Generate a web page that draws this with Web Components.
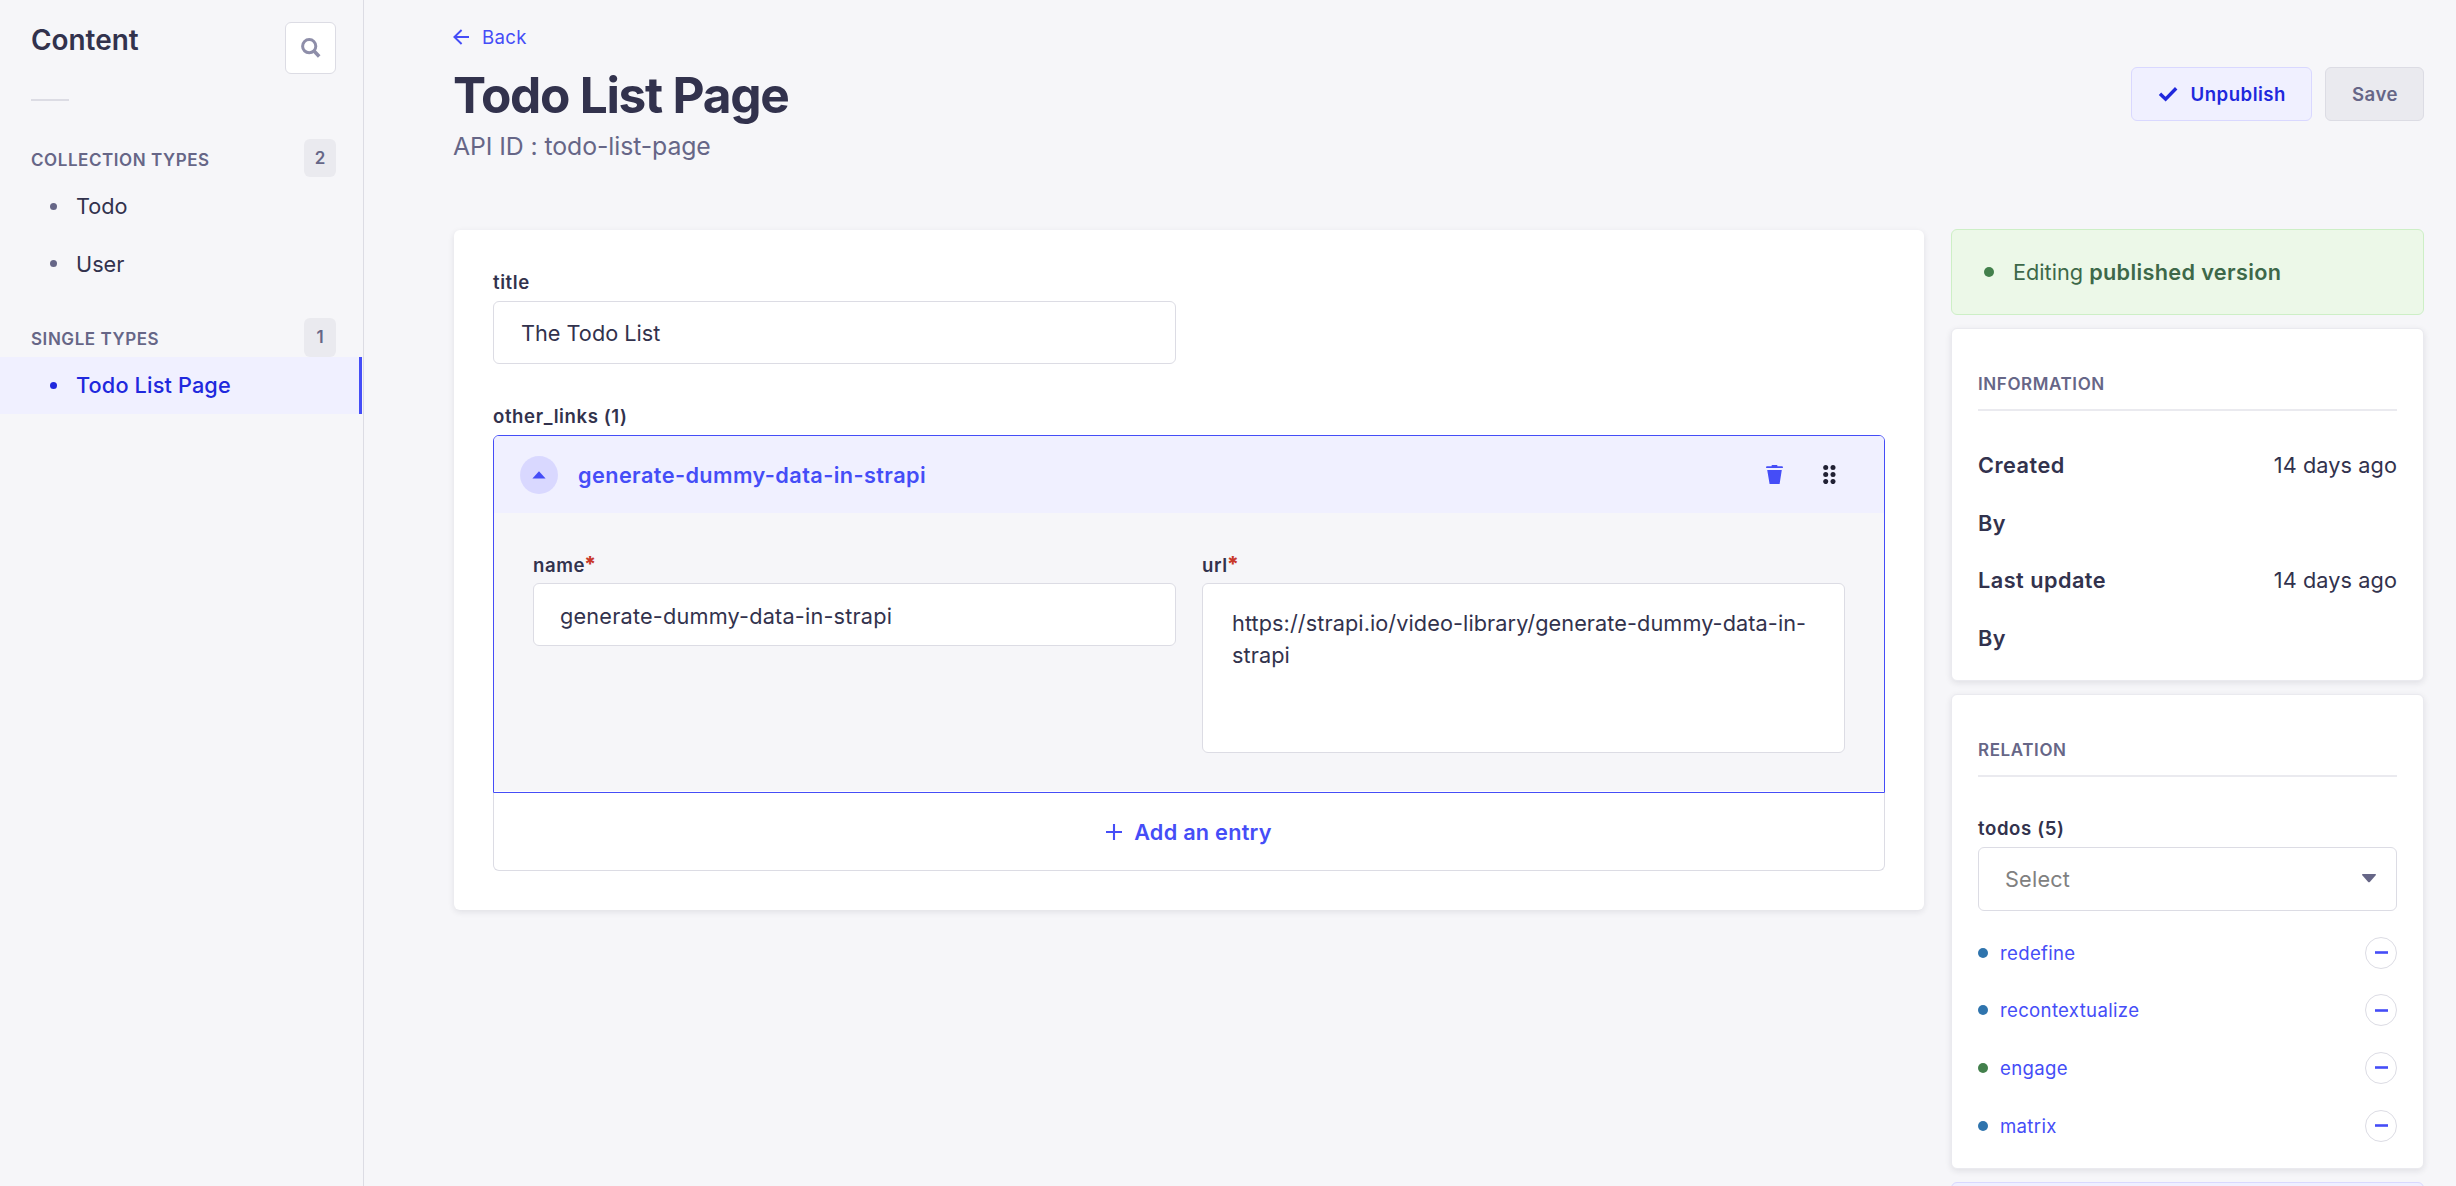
<!DOCTYPE html>
<html lang="en">
<head>
<meta charset="utf-8">
<title>Todo List Page</title>
<style>
    html, body { margin: 0; height: 100%; }
    body {
        --primary100: #f0f0ff;
        --primary200: #d9d8ff;
        --primary600: #454df7;
        --primary700: #2028dd;
        --neutral100: #f6f6f9;
        --neutral150: #eaeaef;
        --neutral200: #dcdce4;
        --neutral500: #8e8ea9;
        --neutral600: #666687;
        --neutral800: #32324d;
        --radius: 6px;
        overflow: hidden;
        background: var(--neutral100);
        color: var(--neutral800);
        font-family: Inter, "Liberation Sans", sans-serif;
        font-size: 21.7px;
        line-height: 32px;
    }
    content-app { height: 1186px; }
</style>
</head>
<body>
<content-app>
    <side-nav slot="nav" heading="Content">
        <nav-section label="Collection Types" count="2">
            <nav-item>Todo</nav-item>
            <nav-item>User</nav-item>
        </nav-section>
        <nav-section label="Single Types" count="1">
            <nav-item active>Todo List Page</nav-item>
        </nav-section>
    </side-nav>
    <page-header heading="Todo List Page" subtitle="API ID : todo-list-page">
        <ui-button variant="secondary"><ui-icon slot="icon" name="check"></ui-icon>Unpublish</ui-button>
        <ui-button variant="disabled">Save</ui-button>
    </page-header>
    <edit-layout>
        <form-card>
            <form-row>
                <text-field label="title" value="The Todo List"></text-field>
            </form-row>
            <repeatable-field label="other_links (1)" heading="generate-dummy-data-in-strapi">
                <form-row>
                    <text-field label="name" required low value="generate-dummy-data-in-strapi"></text-field>
                    <text-field label="url" required multiline value="https://strapi.io/video-library/generate-dummy-data-in-strapi"></text-field>
                </form-row>
            </repeatable-field>
        </form-card>
        <status-banner slot="aside">Editing <b>published version</b></status-banner>
        <side-card slot="aside" heading="Information">
            <info-list>
                <info-row label="Created">14 days ago</info-row>
                <info-row label="By"></info-row>
                <info-row label="Last update">14 days ago</info-row>
                <info-row label="By"></info-row>
            </info-list>
        </side-card>
        <side-card slot="aside" heading="Relation">
            <select-field label="todos (5)" placeholder="Select"></select-field>
            <relation-list>
                <relation-item>redefine</relation-item>
                <relation-item>recontextualize</relation-item>
                <relation-item status="published">engage</relation-item>
                <relation-item>matrix</relation-item>
            </relation-list>
        </side-card>
        <action-box slot="aside"></action-box>
    </edit-layout>
</content-app>

<script>
    // Small base class: every element renders its template into an open root
    class BaseElement extends HTMLElement {
        connectedCallback() {
            if (this.shadowRoot) return;
            this.attachShadow({ mode: 'open' });
            this.shadowRoot.innerHTML = this.render();
        }
        attr(name) {
            return this.getAttribute(name) || '';
        }
    }

    const ICONS = {
        search: { w: 20, h: 20, body: '<circle cx="8.2" cy="8.2" r="6.6" fill="none" stroke="currentColor" stroke-width="3"/><path d="M13 13l5.2 5.4" stroke="currentColor" stroke-width="3.6"/>' },
        back: { w: 16, h: 16, body: '<path d="M16 8H1.4M8.6 1L1.4 8l7.2 7" fill="none" stroke="currentColor" stroke-width="1.9"/>' },
        check: { w: 20, h: 16, body: '<path d="M2 7.8l5.6 5.4L18.2 2.2" fill="none" stroke="currentColor" stroke-width="3.4"/>' },
        up: { w: 14, h: 8, body: '<path d="M7 0.3L13.6 7.6H0.4z" fill="currentColor"/>' },
        down: { w: 14, h: 9, body: '<path d="M0.6 0h12.8q.9.5.3 1.2L7.8 7.9q-.8.8-1.6 0L.3 1.2Q-.3.5.6 0z" fill="currentColor"/>' },
        trash: { w: 17, h: 19, body: '<path d="M5.6 1.2V.6q0-.6.6-.6h4.6q.6 0 .6.6v.6H16q.9 0 .9.9v.9H.1v-.9q0-.9.9-.9zM1.2 4.9h14.6L13.6 19H3.6z" fill="currentColor"/>' },
        drag: { w: 13, h: 19, body: '<g fill="#212134"><circle cx="2.7" cy="2.5" r="2.5"/><circle cx="10" cy="2.5" r="2.5"/><circle cx="2.7" cy="9.5" r="2.5"/><circle cx="10" cy="9.5" r="2.5"/><circle cx="2.7" cy="16.6" r="2.5"/><circle cx="10" cy="16.6" r="2.5"/></g>' },
        plus: { w: 16, h: 16, body: '<path d="M8 0v16M0 8h16" stroke="currentColor" stroke-width="2.1"/>' },
        minus: { w: 13, h: 3, body: '<path d="M0 1.5h13" stroke="currentColor" stroke-width="2.6"/>' }
    };

    class UiIcon extends BaseElement {
        render() {
            const icon = ICONS[this.attr('name')];
            return `
                <style>
                    :host { display: inline-flex; flex: none; }
                    svg { display: block; }
                </style>
                <svg width="${icon.w}" height="${icon.h}" viewBox="0 0 ${icon.w} ${icon.h}">${icon.body}</svg>
            `;
        }
    }

    class ContentApp extends BaseElement {
        render() {
            return `
                <style>
                    :host { display: grid; grid-template-columns: 364px 1fr; }
                    main { padding: 24px 32px 0 90px; min-width: 0; }
                </style>
                <slot name="nav"></slot>
                <main><slot></slot></main>
            `;
        }
    }

    class SideNav extends BaseElement {
        render() {
            return `
                <style>
                    :host { display: block; box-sizing: border-box; border-right: 1px solid var(--neutral200); }
                    header { display: flex; justify-content: space-between; padding: 22px 27px 0 31px; }
                    h2 { margin: 0; font-size: 27.9px; line-height: 36px; font-weight: 600; }
                    button {
                        display: flex; align-items: center; justify-content: center;
                        width: 51px; height: 52px; padding: 0;
                        border: 1px solid var(--neutral200); border-radius: var(--radius);
                        background: #fff; color: var(--neutral500);
                    }
                    hr { width: 38px; height: 2px; margin: 25px 0 38px 31px; border: 0; background: var(--neutral200); }
                    .sections { display: flex; flex-direction: column; gap: 25.6px; }
                </style>
                <header>
                    <h2>${this.attr('heading')}</h2>
                    <button aria-label="Search"><ui-icon name="search"></ui-icon></button>
                </header>
                <hr>
                <div class="sections"><slot></slot></div>
            `;
        }
    }

    class NavSection extends BaseElement {
        render() {
            return `
                <style>
                    :host { display: block; }
                    .head { display: flex; align-items: center; justify-content: space-between; height: 38.4px; padding: 0 27px 0 31px; }
                    .label { padding-top: 3px; font-size: 17px; font-weight: 600; letter-spacing: 0.56px; text-transform: uppercase; color: var(--neutral600); }
                    .count {
                        display: flex; align-items: center; justify-content: center;
                        width: 32px; height: 100%; border-radius: var(--radius);
                        background: var(--neutral150); color: var(--neutral600);
                        font-size: 17px; font-weight: 600;
                    }
                </style>
                <div class="head">
                    <span class="label">${this.attr('label')}</span>
                    <span class="count">${this.attr('count')}</span>
                </div>
                <slot></slot>
            `;
        }
    }

    class NavItem extends BaseElement {
        render() {
            return `
                <style>
                    :host {
                        display: flex; align-items: center; gap: 19px; box-sizing: border-box;
                        height: 57.6px; margin-right: 1px; padding-left: 50px;
                    }
                    :host([active]) {
                        background: var(--primary100); color: var(--primary700);
                        border-right: 3px solid var(--primary600); font-weight: 500; letter-spacing: 0.15px;
                    }
                    i { width: 7px; height: 7px; border-radius: 50%; background: var(--neutral600); }
                    :host([active]) i { background: var(--primary700); }
                </style>
                <i></i><span><slot></slot></span>
            `;
        }
    }

    class PageHeader extends BaseElement {
        render() {
            return `
                <style>
                    :host { display: block; }
                    a { display: flex; align-items: center; gap: 13px; height: 26px; margin-left: -1px; color: var(--primary600); font-size: 18.6px; letter-spacing: 0.3px; }
                    .row { display: flex; align-items: center; justify-content: space-between; height: 54px; margin-top: 17px; }
                    h1 { margin: 0 0 0 -1px; padding-top: 1px; font-size: 49.6px; line-height: 54px; font-weight: 700; letter-spacing: -1.28px; }
                    .actions { display: flex; gap: 13px; }
                    p { margin: 9px 0 0; font-size: 24.8px; letter-spacing: -0.08px; color: var(--neutral600); }
                    p span { margin-left: -1px; }
                </style>
                <a><ui-icon name="back"></ui-icon><span>Back</span></a>
                <div class="row">
                    <h1>${this.attr('heading')}</h1>
                    <div class="actions"><slot></slot></div>
                </div>
                <p><span>${this.attr('subtitle')}</span></p>
            `;
        }
    }

    class UiButton extends BaseElement {
        render() {
            return `
                <style>
                    :host {
                        display: flex; align-items: center; gap: 12px; box-sizing: border-box;
                        height: 54px; padding: 0 25px 0 26px; border: 1px solid; border-radius: var(--radius);
                        font-size: 18.6px; font-weight: 600; letter-spacing: 0.5px;
                    }
                    :host([variant="secondary"]) { background: var(--primary100); border-color: var(--primary200); color: var(--primary700); }
                    :host([variant="disabled"]) { background: var(--neutral150); border-color: var(--neutral200); color: var(--neutral600); }
                </style>
                <slot name="icon"></slot><span><slot></slot></span>
            `;
        }
    }

    class EditLayout extends BaseElement {
        render() {
            return `
                <style>
                    :host { display: grid; grid-template-columns: 1fr 473px; gap: 27px; align-items: start; margin-top: 67px; }
                    aside { display: flex; flex-direction: column; gap: 13px; }
                </style>
                <slot></slot>
                <aside><slot name="aside"></slot></aside>
            `;
        }
    }

    class FormCard extends BaseElement {
        render() {
            return `
                <style>
                    :host {
                        display: flex; flex-direction: column; gap: 39px;
                        margin-top: 1px; padding: 39px; border-radius: var(--radius);
                        background: #fff; box-shadow: 0 2px 6px rgba(33, 33, 52, 0.1);
                    }
                </style>
                <slot></slot>
            `;
        }
    }

    class FormRow extends BaseElement {
        render() {
            return `
                <style>
                    :host { display: grid; grid-template-columns: 1fr 1fr; gap: 26px; align-items: start; }
                </style>
                <slot></slot>
            `;
        }
    }

    class TextField extends BaseElement {
        render() {
            return `
                <style>
                    :host { display: block; }
                    label { display: flex; height: 26px; margin-bottom: 6px; line-height: 26px; font-size: 18.6px; font-weight: 600; letter-spacing: 0.58px; }
                    :host([required]) label { margin-bottom: 5px; }
                    em { margin-left: -1px; font-style: normal; font-size: 21px; font-weight: 800; letter-spacing: 0; color: #c9382a; }
                    .box {
                        box-sizing: border-box; height: 63px; padding: 15px 27px;
                        border: 1px solid var(--neutral200); border-radius: var(--radius); background: #fff;
                        overflow-wrap: break-word;
                    }
                    :host([low]) .box { padding: 16px 26px; letter-spacing: 0.19px; }
                    :host([multiline]) .box { height: 170px; padding: 23px 29px; letter-spacing: 0.08px; }
                </style>
                <label><span>${this.attr('label')}</span>${this.hasAttribute('required') ? '<em>*</em>' : ''}</label>
                <div class="box"><span>${this.attr('value')}</span></div>
            `;
        }
    }

    class RepeatableField extends BaseElement {
        render() {
            return `
                <style>
                    :host { display: block; }
                    label { display: block; height: 26px; margin-bottom: 6px; line-height: 26px; font-size: 18.6px; font-weight: 600; letter-spacing: 0.6px; }
                    .entry { border: 1px solid var(--primary600); border-radius: var(--radius) var(--radius) 0 0; overflow: hidden; }
                    .head {
                        display: flex; align-items: center; height: 77px; padding: 0 48px 0 26px;
                        background: var(--primary100); color: var(--primary600); font-weight: 600; letter-spacing: 0.41px;
                    }
                    .toggle {
                        display: flex; align-items: center; justify-content: center;
                        width: 38px; height: 38px; margin-right: 20px; border-radius: 50%; background: var(--primary200);
                    }
                    .tools { display: flex; gap: 40px; margin-left: auto; }
                    .body { padding: 39px 39px 38px; background: var(--neutral100); border-bottom: 1px solid #fff; }
                    .add {
                        display: flex; align-items: center; justify-content: center; gap: 12px; box-sizing: border-box;
                        height: 78px; border: 1px solid var(--neutral200); border-top: 0;
                        border-radius: 0 0 var(--radius) var(--radius);
                        color: var(--primary600); font-weight: 600; letter-spacing: 0.25px;
                    }
                </style>
                <label><span>${this.attr('label')}</span></label>
                <div class="entry">
                    <div class="head">
                        <span class="toggle"><ui-icon name="up"></ui-icon></span>
                        <span>${this.attr('heading')}</span>
                        <div class="tools"><ui-icon name="trash"></ui-icon><ui-icon name="drag"></ui-icon></div>
                    </div>
                    <div class="body"><slot></slot></div>
                </div>
                <div class="add"><ui-icon name="plus"></ui-icon><span>Add an entry</span></div>
            `;
        }
    }

    class StatusBanner extends BaseElement {
        render() {
            return `
                <style>
                    :host {
                        display: flex; align-items: center; gap: 19px; box-sizing: border-box;
                        height: 86px; padding-left: 32px; border: 1px solid #cdefc6; border-radius: var(--radius);
                        background: #ecf8e8; color: #3d6849;
                    }
                    i { width: 10px; height: 10px; border-radius: 50%; background: #43804c; }
                    ::slotted(b) { font-weight: 600; letter-spacing: 0.33px; }
                </style>
                <i></i><span><slot></slot></span>
            `;
        }
    }

    class SideCard extends BaseElement {
        render() {
            return `
                <style>
                    :host {
                        display: block; padding: 43px 26px 26px; border: 1px solid var(--neutral150); border-radius: var(--radius);
                        background: #fff; box-shadow: 0 2px 6px rgba(33, 33, 52, 0.1);
                    }
                    h3 { margin: 0; font-size: 17px; line-height: 24px; font-weight: 600; letter-spacing: 0.6px; text-transform: uppercase; color: var(--neutral600); }
                    hr { height: 2px; margin: 13px 0 38px; border: 0; background: var(--neutral150); }
                </style>
                <h3><span>${this.attr('heading')}</span></h3>
                <hr>
                <slot></slot>
            `;
        }
    }

    class InfoList extends BaseElement {
        render() {
            return `
                <style>
                    :host { display: flex; flex-direction: column; gap: 25.6px; }
                </style>
                <slot></slot>
            `;
        }
    }

    class InfoRow extends BaseElement {
        render() {
            return `
                <style>
                    :host { display: flex; justify-content: space-between; height: 32px; letter-spacing: 0.08px; }
                    b { font-weight: 600; letter-spacing: 0.48px; }
                </style>
                <b>${this.attr('label')}</b><span><slot></slot></span>
            `;
        }
    }

    class SelectField extends BaseElement {
        render() {
            return `
                <style>
                    :host { display: block; }
                    label { display: block; height: 26px; margin-bottom: 6px; line-height: 26px; font-size: 18.6px; font-weight: 600; letter-spacing: 0.6px; }
                    .box {
                        display: flex; align-items: center; justify-content: space-between; box-sizing: border-box;
                        height: 64px; padding: 0 20px 0 26px; border: 1px solid var(--neutral200); border-radius: var(--radius);
                        color: #808080; letter-spacing: 0.2px;
                    }
                    ui-icon { color: var(--neutral600); }
                </style>
                <label><span>${this.attr('label')}</span></label>
                <div class="box"><span>${this.attr('placeholder')}</span><ui-icon name="down"></ui-icon></div>
            `;
        }
    }

    class RelationList extends BaseElement {
        render() {
            return `
                <style>
                    :host { display: flex; flex-direction: column; gap: 25.6px; margin-top: 26px; }
                </style>
                <slot></slot>
            `;
        }
    }

    class RelationItem extends BaseElement {
        render() {
            return `
                <style>
                    :host { display: flex; align-items: center; height: 32px; font-size: 18.6px; letter-spacing: 0.32px; color: var(--primary600); }
                    i { width: 10px; height: 10px; margin-right: 12px; border-radius: 50%; background: #2f74ad; }
                    :host([status="published"]) i { background: #43804c; }
                    .remove {
                        display: flex; align-items: center; justify-content: center; box-sizing: border-box;
                        width: 32px; height: 32px; margin-left: auto; border: 1px solid var(--neutral200); border-radius: 50%;
                    }
                </style>
                <i></i><span><slot></slot></span>
                <div class="remove"><ui-icon name="minus"></ui-icon></div>
            `;
        }
    }

    class ActionBox extends BaseElement {
        render() {
            return `
                <style>
                    :host {
                        display: block; box-sizing: border-box; height: 54px;
                        border: 1px solid var(--primary200); border-radius: var(--radius); background: var(--primary100);
                    }
                </style>
            `;
        }
    }

    customElements.define('ui-icon', UiIcon);
    customElements.define('content-app', ContentApp);
    customElements.define('side-nav', SideNav);
    customElements.define('nav-section', NavSection);
    customElements.define('nav-item', NavItem);
    customElements.define('page-header', PageHeader);
    customElements.define('ui-button', UiButton);
    customElements.define('edit-layout', EditLayout);
    customElements.define('form-card', FormCard);
    customElements.define('form-row', FormRow);
    customElements.define('text-field', TextField);
    customElements.define('repeatable-field', RepeatableField);
    customElements.define('status-banner', StatusBanner);
    customElements.define('side-card', SideCard);
    customElements.define('info-list', InfoList);
    customElements.define('info-row', InfoRow);
    customElements.define('select-field', SelectField);
    customElements.define('relation-list', RelationList);
    customElements.define('relation-item', RelationItem);
    customElements.define('action-box', ActionBox);
</script>
</body>
</html>
